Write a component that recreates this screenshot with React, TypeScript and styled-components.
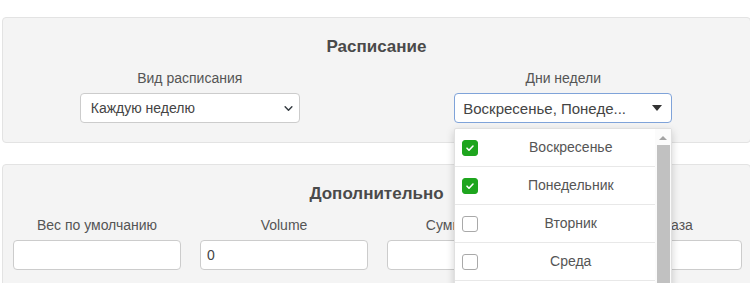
import React from "react";
import styled, { createGlobalStyle } from "styled-components";

const GlobalStyle = createGlobalStyle`
  html, body {
    margin: 0;
    padding: 0;
    background: #ffffff;
    overflow: hidden;
  }
  body {
    font-family: "Liberation Sans", Arial, sans-serif;
    font-size: 14px;
    color: #555555;
  }
  * {
    box-sizing: border-box;
  }
`;

const Page = styled.div`
  width: 760px;
  padding: 17px 0 0 2px;
  display: flex;
  flex-direction: column;
  gap: 21px;
`;

const Panel = styled.section<{ bottom: number }>`
  width: 749px;
  background: #f4f4f4;
  border: 1px solid #e3e3e3;
  border-radius: 4px;
  padding: 19px 0 ${(p) => p.bottom}px 0;
`;

const Title = styled.h3`
  margin: 0;
  text-align: center;
  font-size: 17px;
  font-weight: bold;
  line-height: 20px;
  color: #4a4a4a;
`;

const TwoCols = styled.div`
  display: grid;
  grid-template-columns: 1fr 1fr;
  margin-top: 11px;
`;

const FourCols = styled.div`
  display: grid;
  grid-template-columns: repeat(4, 168px);
  column-gap: 19px;
  padding-left: 10px;
  margin-top: 11px;
`;

const Field = styled.div`
  position: relative;
  display: flex;
  flex-direction: column;
  align-items: center;
  gap: 5px;
`;

const Label = styled.label`
  line-height: 20px;
  font-size: 14px;
  color: #555555;
  white-space: nowrap;
`;

const Select = styled.div<{ w: number; focused?: boolean }>`
  width: ${(p) => p.w}px;
  height: 30px;
  background: #ffffff;
  border: 1px solid ${(p) => (p.focused ? "#7fa3d9" : "#cccccc")};
  border-radius: 4px;
  display: flex;
  align-items: center;
  justify-content: space-between;
  padding: 0 ${(p) => (p.focused ? 8 : 6)}px 0 ${(p) => (p.focused ? 8 : 10)}px;
  font-size: ${(p) => (p.focused ? 15 : 14)}px;
  color: #444444;
`;

const Input = styled.div`
  width: 168px;
  height: 30px;
  background: #ffffff;
  border: 1px solid #cccccc;
  border-radius: 4px;
  display: flex;
  align-items: center;
  padding: 0 6px;
  font-size: 14px;
  color: #444444;
`;

const Menu = styled.div`
  position: absolute;
  top: 60px;
  left: calc(50% - 109px);
  width: 218px;
  height: 170px;
  background: #ffffff;
  border: 1px solid #e0e0e0;
  border-radius: 2px;
  box-shadow: 0 3px 8px rgba(0, 0, 0, 0.18);
  display: flex;
  z-index: 10;
`;

const List = styled.ul`
  flex: 1;
  margin: 0;
  padding: 0;
  list-style: none;
`;

const Row = styled.li`
  height: 38px;
  display: flex;
  align-items: center;
  padding-left: 7px;
  border-bottom: 1px solid #e8e8e8;
`;

const Box = styled.span<{ checked?: boolean }>`
  width: 16px;
  height: 16px;
  border-radius: 3px;
  flex: none;
  display: flex;
  align-items: center;
  justify-content: center;
  background: ${(p) => (p.checked ? "#1ea51e" : "#ffffff")};
  border: 1px solid ${(p) => (p.checked ? "#1ea51e" : "#a9a9a9")};
`;

const RowText = styled.span`
  flex: 1;
  text-align: center;
  padding-left: 8px;
  font-size: 14px;
  line-height: 18px;
  margin-top: -2px;
  color: #555555;
`;

const Scrollbar = styled.div`
  width: 16px;
  display: flex;
  flex-direction: column;
  align-items: center;
  background: #fbfbfb;
`;

const Thumb = styled.div`
  margin-top: 5px;
  width: 13px;
  flex: 1;
  background: #c1c1c1;
`;

const Arrow = styled.div`
  margin-top: 7px;
  width: 0;
  height: 0;
  border-left: 4px solid transparent;
  border-right: 4px solid transparent;
  border-bottom: 4px solid #a3a3a3;
`;

const Caret = styled.span`
  width: 0;
  height: 0;
  border-left: 5px solid transparent;
  border-right: 5px solid transparent;
  border-top: 6px solid #333333;
  margin-right: 1px;
`;

const Chevron = () => (
  <svg width="9" height="9" viewBox="0 0 16 16">
    <path
      d="M2 5l6 6 6-6"
      fill="none"
      stroke="#343a40"
      strokeWidth="2.6"
      strokeLinecap="round"
      strokeLinejoin="round"
    />
  </svg>
);

const Check = () => (
  <svg width="10" height="10" viewBox="0 0 10 10">
    <path
      d="M2 5.2l2 2 4-4.2"
      fill="none"
      stroke="#ffffff"
      strokeWidth="1.6"
      strokeLinecap="round"
      strokeLinejoin="round"
    />
  </svg>
);

const days = [
  { name: "Воскресенье", checked: true },
  { name: "Понедельник", checked: true },
  { name: "Вторник", checked: false },
  { name: "Среда", checked: false },
];

const extra = [
  { label: "Вес по умолчанию", value: "" },
  { label: "Volume", value: "0" },
  { label: "Сумма заказа", value: "" },
  { label: "Тип заказа", value: "" },
];

export default function App() {
  return (
    <>
      <GlobalStyle />
      <Page>
        <Panel bottom={19}>
          <Title>Расписание</Title>
          <TwoCols>
            <Field>
              <Label>Вид расписания</Label>
              <Select w={220}>
                <span>Каждую неделю</span>
                <Chevron />
              </Select>
            </Field>
            <Field>
              <Label>Дни недели</Label>
              <Select w={218} focused>
                <span>Воскресенье, Понеде...</span>
                <Caret />
              </Select>
              <Menu>
                <List>
                  {days.map((d) => (
                    <Row key={d.name}>
                      <Box checked={d.checked}>{d.checked && <Check />}</Box>
                      <RowText>{d.name}</RowText>
                    </Row>
                  ))}
                </List>
                <Scrollbar>
                  <Arrow />
                  <Thumb />
                </Scrollbar>
              </Menu>
            </Field>
          </TwoCols>
        </Panel>
        <Panel bottom={19}>
          <Title>Дополнительно</Title>
          <FourCols>
            {extra.map((f) => (
              <Field key={f.label}>
                <Label>{f.label}</Label>
                <Input>{f.value}</Input>
              </Field>
            ))}
          </FourCols>
        </Panel>
      </Page>
    </>
  );
}
